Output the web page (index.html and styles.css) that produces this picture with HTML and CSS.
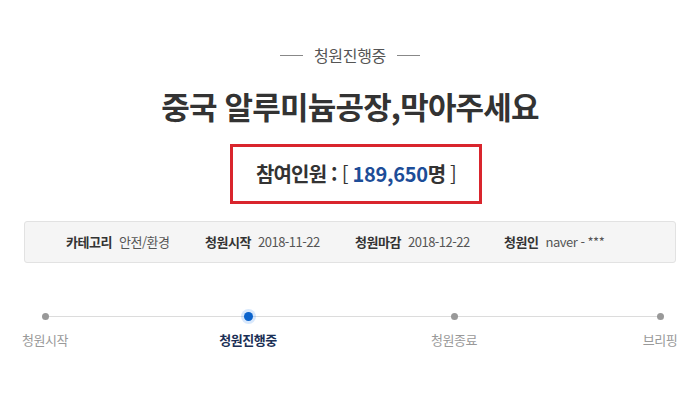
FILE: index.html
```html
<!DOCTYPE html>
<html lang="ko">
<head>
  <meta charset="UTF-8">
  <meta name="viewport" content="width=device-width, initial-scale=1.0">
  <title>청원진행중</title>
  <link rel="stylesheet" href="styles.css">
</head>
<body>
  <div class="petition">
    <div class="status">
      <span class="status-line"></span>
      <span class="status-text">청원진행중</span>
      <span class="status-line"></span>
    </div>

    <h1 class="title">중국 알루미늄공장,막아주세요</h1>

    <div class="count-wrap">
      <div class="count">
        <strong>참여인원 :</strong> <span class="bracket">[</span> <span class="num">189,650</span><strong>명</strong> <span class="bracket">]</span>
      </div>
    </div>

    <ul class="info">
      <li><b>카테고리</b> 안전/환경</li>
      <li><b>청원시작</b> 2018-11-22</li>
      <li><b>청원마감</b> 2018-12-22</li>
      <li><b>청원인</b> naver - ***</li>
    </ul>

    <ol class="steps">
      <li class="step"><span class="dot"></span><span class="label">청원시작</span></li>
      <li class="step active"><span class="dot"></span><span class="label">청원진행중</span></li>
      <li class="step"><span class="dot"></span><span class="label">청원종료</span></li>
      <li class="step"><span class="dot"></span><span class="label">브리핑</span></li>
    </ol>
  </div>
</body>
</html>
```

FILE: styles.css
```css
body {
  margin: 0;
  font-family: "Noto Sans CJK KR", "Noto Sans", sans-serif;
  background: #fff;
  color: #333;
}

.petition {
  width: 700px;
}

.status {
  display: flex;
  justify-content: center;
  align-items: center;
  gap: 11px;
  margin-top: 45px;
  height: 20px;
}
.status-text {
  font-size: 16px;
  line-height: 20px;
  color: #555;
  letter-spacing: -0.3px;
}
.status-line {
  width: 23px;
  height: 1px;
  background: #888;
}

.title {
  margin: 21px 0 0;
  text-align: center;
  font-size: 31px;
  line-height: 40px;
  font-weight: bold;
  letter-spacing: -0.8px;
  color: #333;
}

.count-wrap {
  display: flex;
  justify-content: center;
  margin: 18px 0 0 12px;
}
.count {
  width: 246px;
  height: 54px;
  border: 3px solid #d9252d;
  text-align: center;
  font-size: 20px;
  line-height: 54px;
  letter-spacing: -0.8px;
  color: #333;
}
.count strong {
  font-weight: bold;
}
.count .bracket {
  font-weight: normal;
}
.count .num {
  color: #1d4d98;
  font-weight: bold;
  letter-spacing: -0.3px;
}

.info {
  list-style: none;
  margin: 17px 24px 0;
  padding: 0 0 0 41px;
  height: 40px;
  border: 1px solid #e2e2e2;
  border-radius: 3px;
  background: #f5f5f5;
  display: grid;
  grid-template-columns: 139px 150px 149px auto;
  font-size: 13px;
  line-height: 40px;
  color: #555;
  letter-spacing: -0.5px;
}
.info b {
  color: #333;
  margin-right: 4px;
}

.steps {
  list-style: none;
  margin: 50px 0 0;
  padding: 0 0 0 5px;
  display: flex;
  justify-content: space-between;
  position: relative;
}
.steps::before {
  content: "";
  position: absolute;
  left: 45px;
  right: 40px;
  top: 3px;
  height: 1px;
  background: #dcdcdc;
}
.step {
  width: 80px;
  display: flex;
  flex-direction: column;
  align-items: center;
  position: relative;
}
.step:nth-child(2) {
  margin-left: -3px;
}
.dot {
  width: 7px;
  height: 7px;
  border-radius: 50%;
  background: #999;
}
.label {
  margin-top: 11px;
  font-size: 13px;
  line-height: 18px;
  color: #999;
  letter-spacing: -0.5px;
}
.step.active .dot {
  width: 9px;
  height: 9px;
  margin-top: -1px;
  margin-bottom: -1px;
  background: #0b63cc;
  box-shadow: 0 0 0 3px rgba(60, 140, 240, 0.2);
}
.step.active .label {
  color: #1b2f55;
  font-weight: bold;
}
```
